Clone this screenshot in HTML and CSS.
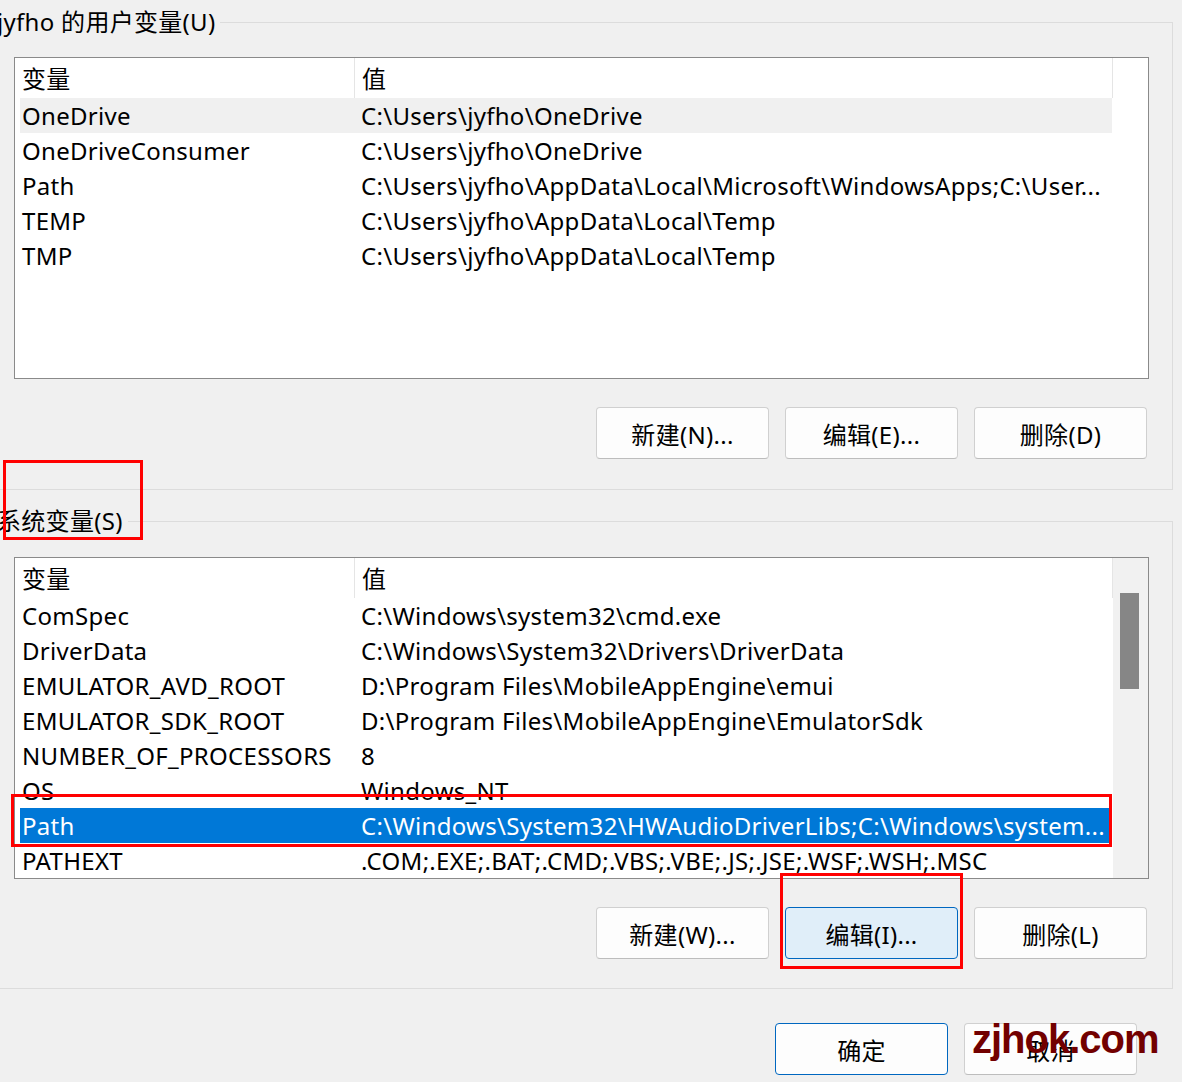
FILE: index.html
```html
<!DOCTYPE html>
<html lang="zh-CN">
<head>
<meta charset="utf-8">
<title>环境变量</title>
<link rel="stylesheet" href="styles.css">
</head>
<body>
<div class="dialog">
  <fieldset class="group group-user">
    <legend class="group-title">jyfho 的用户变量(U)</legend>
    <div class="list">
      <div class="list-main">
        <div class="list-head">
          <div class="hcell">变量</div>
          <div class="hcell">值</div>
        </div>
        <div class="rows">
          <div class="row row-hover"><span class="c-name">OneDrive</span><span class="c-value">C:\Users\jyfho\OneDrive</span></div>
          <div class="row"><span class="c-name">OneDriveConsumer</span><span class="c-value">C:\Users\jyfho\OneDrive</span></div>
          <div class="row"><span class="c-name">Path</span><span class="c-value">C:\Users\jyfho\AppData\Local\Microsoft\WindowsApps;C:\User...</span></div>
          <div class="row"><span class="c-name">TEMP</span><span class="c-value">C:\Users\jyfho\AppData\Local\Temp</span></div>
          <div class="row"><span class="c-name">TMP</span><span class="c-value">C:\Users\jyfho\AppData\Local\Temp</span></div>
        </div>
      </div>
      <div class="scroll-space"></div>
    </div>
    <div class="actions">
      <button class="btn">新建(N)...</button>
      <button class="btn">编辑(E)...</button>
      <button class="btn">删除(D)</button>
    </div>
  </fieldset>

  <fieldset class="group group-system">
    <legend class="group-title">系统变量(S)</legend>
    <div class="list">
      <div class="list-main">
        <div class="list-head">
          <div class="hcell">变量</div>
          <div class="hcell">值</div>
        </div>
        <div class="rows">
          <div class="row"><span class="c-name">ComSpec</span><span class="c-value">C:\Windows\system32\cmd.exe</span></div>
          <div class="row"><span class="c-name">DriverData</span><span class="c-value">C:\Windows\System32\Drivers\DriverData</span></div>
          <div class="row"><span class="c-name">EMULATOR_AVD_ROOT</span><span class="c-value">D:\Program Files\MobileAppEngine\emui</span></div>
          <div class="row"><span class="c-name">EMULATOR_SDK_ROOT</span><span class="c-value">D:\Program Files\MobileAppEngine\EmulatorSdk</span></div>
          <div class="row"><span class="c-name">NUMBER_OF_PROCESSORS</span><span class="c-value">8</span></div>
          <div class="row"><span class="c-name">OS</span><span class="c-value">Windows_NT</span></div>
          <div class="row row-selected"><span class="c-name">Path</span><span class="c-value">C:\Windows\System32\HWAudioDriverLibs;C:\Windows\system...</span></div>
          <div class="row"><span class="c-name">PATHEXT</span><span class="c-value">.COM;.EXE;.BAT;.CMD;.VBS;.VBE;.JS;.JSE;.WSF;.WSH;.MSC</span></div>
        </div>
      </div>
      <div class="scrollbar"><div class="thumb"></div></div>
    </div>
    <div class="actions">
      <button class="btn">新建(W)...</button>
      <button class="btn btn-focus">编辑(I)...</button>
      <button class="btn">删除(L)</button>
    </div>
  </fieldset>

  <div class="footer">
    <button class="btn btn-default">确定</button>
    <button class="btn">取消</button>
  </div>
</div>

<div class="mark mark-title"></div>
<div class="mark mark-row"></div>
<div class="mark mark-button"></div>
<div class="watermark">zjhok.com</div>
</body>
</html>
```

FILE: styles.css
```css
* {
  box-sizing: border-box;
}

html,
body {
  margin: 0;
  padding: 0;
}

body {
  position: relative;
  width: 1182px;
  height: 1082px;
  overflow: hidden;
  background: #f0f0f0;
  color: #000;
  font-family: "Noto Sans", "Noto Sans CJK SC", sans-serif;
  font-size: 24px;
  letter-spacing: 0.3px;
}

.dialog {
  width: 1182px;
}

.group {
  width: 1173px;
  margin: 0;
  min-inline-size: 0;
  border: 1px solid #dcdcdc;
  border-left: none;
  padding: 19px 23px 30px 14px;
}

.group-user {
  margin-top: 6px;
}

.group-system {
  margin-top: 15px;
  padding-top: 20px;
  padding-bottom: 29px;
}

.group-title {
  margin-left: -17px;
  padding: 0 5px 0 0;
  line-height: 32px;
  font-size: 24px;
}

.list {
  display: flex;
  height: 322px;
  border: 1px solid #8a8a8a;
  background: #fff;
}

.list-main {
  width: 1098px;
  flex: none;
}

.list-head {
  display: grid;
  grid-template-columns: 340px 1fr;
  height: 40px;
}

.hcell {
  padding: 2px 0 0 7px;
  line-height: 38px;
  border-right: 1px solid #e5e5e5;
}

.rows {
  padding: 0 1px 0 5px;
}

.row {
  display: grid;
  grid-template-columns: 335px 1fr;
  height: 35px;
  line-height: 35px;
  white-space: nowrap;
}

.c-name {
  padding-left: 2px;
  overflow: hidden;
}

.c-value {
  padding-left: 6px;
  overflow: hidden;
}

.row-hover {
  background: #f0f0f0;
}

.row-selected {
  background: #0078d7;
  color: #fff;
}

.scroll-space {
  flex: 1;
}

.scrollbar {
  flex: 1;
  background: #f1f1f1;
  padding: 35px 0 0 7px;
}

.thumb {
  width: 19px;
  height: 96px;
  background: #868686;
}

.actions {
  display: flex;
  justify-content: flex-end;
  gap: 16px;
  margin-top: 28px;
  padding-right: 2px;
}

.btn {
  display: flex;
  align-items: center;
  justify-content: center;
  width: 173px;
  height: 52px;
  padding: 0;
  background: #fdfdfd;
  border: 1px solid #d0d0d0;
  border-bottom-color: #bdbdbd;
  border-radius: 4px;
  color: #000;
  font: inherit;
  letter-spacing: inherit;
}

.btn-focus {
  background: #e0eef9;
  border-color: #0067c0;
}

.btn-default {
  border-color: #0067c0;
}

.footer {
  display: flex;
  justify-content: flex-end;
  gap: 16px;
  margin-top: 34px;
  padding-right: 45px;
}

.mark {
  position: absolute;
  border: 3px solid #f00;
}

.mark-title {
  left: 3px;
  top: 460px;
  width: 140px;
  height: 80px;
}

.mark-row {
  left: 11px;
  top: 794px;
  width: 1101px;
  height: 53px;
}

.mark-button {
  left: 780px;
  top: 873px;
  width: 183px;
  height: 96px;
}

.watermark {
  position: absolute;
  left: 972px;
  top: 1019px;
  color: #720000;
  font-family: "Liberation Sans", Arial, sans-serif;
  font-weight: bold;
  font-size: 40px;
  line-height: 40px;
  letter-spacing: -1px;
}
```
